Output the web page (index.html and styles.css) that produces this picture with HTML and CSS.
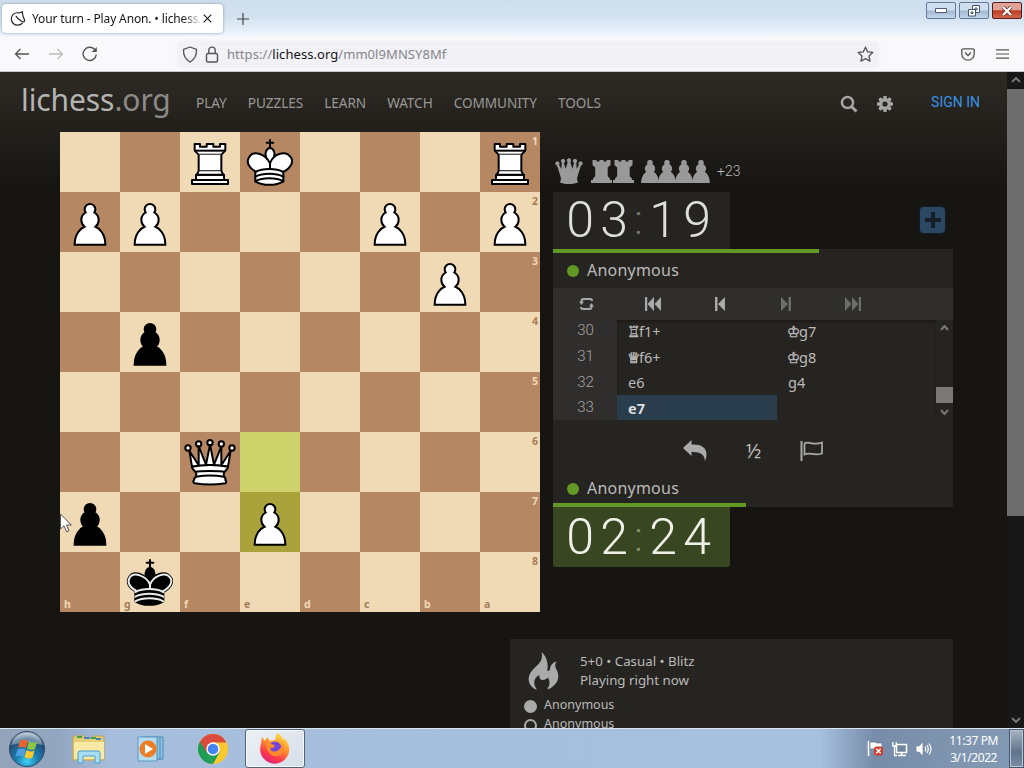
FILE: index.html
```html
<!DOCTYPE html>
<html lang="en">
<head>
<meta charset="utf-8">
<title>Your turn - Play Anon. • lichess.org</title>
<link rel="stylesheet" href="styles.css">
</head>
<body>
<svg class="defs" xmlns="http://www.w3.org/2000/svg">
  <symbol id="pawn" viewBox="0 0 45 45"><path stroke="#000" stroke-width="1.5" stroke-linecap="round" d="M22.5 9c-2.21 0-4 1.79-4 4 0 .89.29 1.71.78 2.38C17.33 16.5 16 18.59 16 21c0 2.03.94 3.84 2.41 5.03-3 1.06-7.41 5.55-7.41 13.47h23c0-7.92-4.41-12.41-7.41-13.47 1.47-1.19 2.41-3 2.41-5.03 0-2.41-1.33-4.5-3.28-5.62.49-.67.78-1.49.78-2.38 0-2.21-1.79-4-4-4z"/></symbol>
  <symbol id="rook" viewBox="0 0 45 45"><g stroke="#000" stroke-width="1.5" stroke-linejoin="round"><path d="M9 39h27v-3H9v3zM12 36v-4h21v4H12zM11 14V9h4v2h5V9h5v2h5V9h4v5"/><path d="M34 14l-3 3H14l-3-3"/><path d="M31 17v12.5H14V17"/><path d="M31 29.5l1.5 2.5h-20l1.5-2.5"/><path d="M11 14h23" fill="none"/></g></symbol>
  <symbol id="king" viewBox="0 0 45 45"><g stroke="#000" stroke-width="1.5" stroke-linecap="round" stroke-linejoin="round"><path fill="none" d="M22.5 11.63V6M20 8h5"/><path d="M22.5 25s4.5-7.5 3-10.5c0 0-1-2.5-3-2.5s-3 2.5-3 2.5c-1.5 3 3 10.5 3 10.5"/><path d="M11.5 37c5.5 3.5 15.5 3.5 21 0v-7s9-4.5 6-10.5c-4-6.5-13.5-3.5-16 4V27v-3.5c-3.5-7.5-13-10.5-16-4-3 6 5 10 5 10V37z"/><path fill="none" d="M11.5 30c5.5-3 15.5-3 21 0m-21 3.5c5.5-3 15.5-3 21 0m-21 3.5c5.5-3 15.5-3 21 0"/></g></symbol>
  <symbol id="blackking" viewBox="0 0 45 45"><use href="#king"/><g fill="none" stroke="#ececec" stroke-width="1.5" stroke-linecap="round" stroke-linejoin="round"><path d="M32 29.5s8.5-4 6.03-9.65C34.15 14 25 18 22.5 24.5l.01 2.1-.01-2.1C20 18 9.906 14 6.997 19.85c-2.497 5.65 4.853 9 4.853 9"/><path d="M11.5 30c5.5-3 15.5-3 21 0m-21 3.5c5.5-3 15.5-3 21 0m-21 3.5c5.5-3 15.5-3 21 0"/></g></symbol>
  <symbol id="queen" viewBox="0 0 45 45"><g stroke="#000" stroke-width="1.5" stroke-linejoin="round"><circle cx="6" cy="12" r="2"/><circle cx="14" cy="9" r="2"/><circle cx="22.5" cy="8" r="2"/><circle cx="31" cy="9" r="2"/><circle cx="39" cy="12" r="2"/><path d="M9 26c8.5-1.5 21-1.5 27 0l2-12-7 11V11l-5.5 13.5-3-15-3 15-5.5-14V25L7 14l2 12z"/><path d="M9 26c0 2 1.5 2 2.5 4 1 1.5 1 1 .5 3.5-1.5 1-1.5 2.5-1.5 2.5-1.5 1.5.5 2.5.5 2.5 6.5 1 16.5 1 23 0 0 0 1.5-1 0-2.5 0 0 .5-1.5-1-2.5-.5-2.5-.5-2 .5-3.5 1-2 2.5-2 2.5-4-8.5-1.5-18.5-1.5-27 0z"/><path fill="none" d="M11.5 30c3.5-1 18.5-1 22 0M12 33.5c6-1 15-1 21 0"/></g></symbol>
  <symbol id="m-queen" viewBox="0 0 28 26"><g fill="#999" stroke="#999"><circle cx="2.400" cy="5.500" r="1.700"/><circle cx="8" cy="3" r="1.700"/><circle cx="14" cy="2.400" r="1.700"/><circle cx="20" cy="3" r="1.700"/><circle cx="25.600" cy="5.500" r="1.700"/><path stroke-width="1.800" stroke-linejoin="round" d="M2.500 6l3.500 11 1 4-1 3q8 2.500 16 0l-1-3 1-4 3.500-11-4.500 8-.7-10L17.500 14 14 3l-3.500 11L7.700 4 7 14z"/></g></symbol>
  <symbol id="m-rook" viewBox="0 0 21 23"><path fill="#999" d="M1.500 0h4v1.500h3V0h4v1.500h3V0h4v5l-2.800 2.500v8.800L19 18.500V20h2v3H0v-3h2v-1.500l2.200-2.200V7.500L1.500 5z"/></symbol>
  <symbol id="m-pawn" viewBox="0 0 18 23"><path fill="#999" d="M9 0c2.200 0 3.600 2.200 2.400 4.200 3.300 2 3.500 5.800 1.300 7.500C15.500 13.500 17.500 17 18 23H0c.5-6 2.500-9.500 5.300-11.300-2.200-1.700-2-5.500 1.300-7.500C5.400 2.200 6.800 0 9 0z"/></symbol>
</svg>

<div class="screen">
  <header class="tabs">
    <div class="tab">
      <svg class="fav" width="16" height="16" viewBox="0 0 16 16" fill="none" stroke="#222" stroke-width="1.200"><path d="M8.500 1.800C4 1.300 1.200 4.500 1.300 8c.1 3.600 3 6.300 6.400 6.200 2 0 3.600-.8 4.800-2.200"/><path d="M8.500 1.800c1.500.1 2.700-.2 3.700-1l.4 2.200c.2 2.700 1.600 4.600 2 6.300.2 1.200-1 2-2 1.500C10.500 9.500 7.500 8.500 6 5"/></svg>
      <div class="tabtitle">Your turn - Play Anon. • lichess.</div>
      <svg width="9" height="9" viewBox="0 0 9 9" stroke="#222" stroke-width="1.200"><path d="M.7.7l7.600 7.600M8.300.7L.7 8.300"/></svg>
    </div>
    <svg class="newtab" width="12" height="12" viewBox="0 0 12 12" stroke="#444" stroke-width="1.200"><path d="M6 0v12M0 6h12"/></svg>
    <div class="winbtns">
      <span class="wb"><svg width="12" height="5" viewBox="0 0 12 5"><path d="M.5.5h11v4H.5z" fill="#fff" stroke="#4c5c74"/></svg></span>
      <span class="wb"><svg width="12" height="12" viewBox="0 0 12 12" fill="#fff" stroke="#44546c"><path d="M4.500.5h7v7h-7z"/><path d="M7 3h2v2H7z"/><path d="M.5 4.500h7v6.500h-7z"/><path d="M3 7h2v1.500H3z"/></svg></span>
      <span class="wb close"><svg width="12" height="10" viewBox="0 0 12 10"><path d="M2 1l8 8M10 1L2 9" stroke="#6b2620" stroke-width="3.800"/><path d="M2 1l8 8M10 1L2 9" stroke="#fff" stroke-width="2.400"/></svg></span>
    </div>
  </header>

  <nav class="toolbar">
    <svg width="16" height="12" viewBox="0 0 16 12" fill="none" stroke="#555" stroke-width="1.300"><path d="M15 6H1.500M6.500 1L1.500 6l5 5"/></svg>
    <svg class="fwd" width="16" height="12" viewBox="0 0 16 12" fill="none" stroke="#bbb" stroke-width="1.300"><path d="M1 6h13.500M9.500 1l5 5-5 5"/></svg>
    <svg class="reload" width="16" height="16" viewBox="0 0 16 16" fill="none" stroke="#555" stroke-width="1.400"><path d="M14.300 8.500A6.600 6.600 0 1 1 12.500 3.300l1.500 1.500"/><path d="M14.800 1v5H9.600z" fill="#555" stroke="none"/></svg>
    <div class="urlbar">
      <svg width="16" height="17" viewBox="0 0 16 17" fill="none" stroke="#555" stroke-width="1.300"><path d="M8 1l6.500 2.300c.3 6-1.700 10.200-6.500 12.700C3.200 13.500 1.200 9.300 1.500 3.300z" stroke-linejoin="round"/></svg>
      <svg class="lock" width="14" height="17" viewBox="0 0 14 17" fill="none" stroke="#555" stroke-width="1.400"><rect x="1.500" y="7.500" width="11" height="8.500" rx="1.500"/><path d="M3.800 7.500V4.300a3.200 3.200 0 0 1 6.400 0v3.200"/></svg>
      <span class="url">https://<b>lichess.org</b>/mm0l9MNSY8Mf</span>
      <svg class="star" width="17" height="17" viewBox="0 0 17 17" fill="none" stroke="#555" stroke-width="1.300" stroke-linejoin="round"><path d="M8.500 1.200l2.200 4.700 5.100.6-3.800 3.500 1 5.100-4.500-2.500L4 15.100l1-5.100-3.800-3.500 5.100-.6z"/></svg>
    </div>
    <svg class="pocket" width="14" height="13" viewBox="0 0 14 13" fill="none" stroke="#555" stroke-width="1.300"><path d="M2 .8h10q1.200 0 1.200 1.200v4a6.200 6.200 0 0 1-12.400 0V2Q.8.800 2 .800z"/><path d="M4 4.500l3 3 3-3"/></svg>
    <svg class="menu" width="13" height="10" viewBox="0 0 13 10" stroke="#555" stroke-width="1.200"><path d="M0 .8h13M0 5h13M0 9.200h13"/></svg>
  </nav>

  <div class="viewport">
    <div class="page">
      <header class="top">
        <h1>lichess<span>.org</span></h1>
        <nav class="links"><a>PLAY</a><a>PUZZLES</a><a>LEARN</a><a>WATCH</a><a>COMMUNITY</a><a>TOOLS</a></nav>
        <div class="tools">
          <svg width="18" height="18" viewBox="0 0 18 18" fill="none" stroke="#a5a5a3" stroke-width="2.500"><circle cx="7.500" cy="7.500" r="5.600"/><path d="M11.500 11.500l5 5" stroke-width="3"/></svg>
          <svg class="gear" width="16" height="16" viewBox="-8 -8 16 16"><g fill="#a5a5a3"><path id="tooth" d="M-1.500-8h3l.5 3h-4zM-1.500 8h3l.5-3h-4z"/><use href="#tooth" transform="rotate(45)"/><use href="#tooth" transform="rotate(90)"/><use href="#tooth" transform="rotate(135)"/></g><circle r="4.200" fill="none" stroke="#a5a5a3" stroke-width="3.200"/></svg>
          <a class="signin">SIGN IN</a>
        </div>
      </header>

      <main class="game">
        <div class="board">
          <i class="hl from c4 r6"></i><i class="hl to c4 r7"></i>
          <svg class="w c3 r1"><use href="#rook"/></svg>
          <svg class="w c4 r1"><use href="#king"/></svg>
          <svg class="w c8 r1"><use href="#rook"/></svg>
          <svg class="w c1 r2"><use href="#pawn"/></svg>
          <svg class="w c2 r2"><use href="#pawn"/></svg>
          <svg class="w c6 r2"><use href="#pawn"/></svg>
          <svg class="w c8 r2"><use href="#pawn"/></svg>
          <svg class="w c7 r3"><use href="#pawn"/></svg>
          <svg class="b c2 r4"><use href="#pawn"/></svg>
          <svg class="w c3 r6"><use href="#queen"/></svg>
          <svg class="b c1 r7"><use href="#pawn"/></svg>
          <svg class="w c4 r7"><use href="#pawn"/></svg>
          <svg class="b c2 r8"><use href="#blackking"/></svg>
          <span class="rank lt c8 r1">1</span><span class="rank dk c8 r2">2</span><span class="rank lt c8 r3">3</span><span class="rank dk c8 r4">4</span><span class="rank lt c8 r5">5</span><span class="rank dk c8 r6">6</span><span class="rank lt c8 r7">7</span><span class="rank dk c8 r8">8</span>
          <span class="file lt c1 r8">h</span><span class="file dk c2 r8">g</span><span class="file lt c3 r8">f</span><span class="file dk c4 r8">e</span><span class="file lt c5 r8">d</span><span class="file dk c6 r8">c</span><span class="file lt c7 r8">b</span><span class="file dk c8 r8">a</span>
          <svg class="cursor" width="13" height="20" viewBox="0 0 13 20"><path d="M.5 1v15l3.500-3.200 2.600 6 2.400-1-2.500-5.800h4.800z" fill="#fff" stroke="#555"/></svg>
        </div>

        <section class="side">
          <div class="material">
            <svg width="28" height="26"><use href="#m-queen"/></svg>
            <span><svg width="21" height="23"><use href="#m-rook"/></svg><svg width="21" height="23"><use href="#m-rook"/></svg></span>
            <span class="pawns"><svg width="18" height="23"><use href="#m-pawn"/></svg><svg width="18" height="23"><use href="#m-pawn"/></svg><svg width="18" height="23"><use href="#m-pawn"/></svg><svg width="18" height="23"><use href="#m-pawn"/></svg></span>
            <em>+23</em>
          </div>
          <div class="clockrow">
            <div class="clock"><span>0</span><span>3</span><i>:</i><span>1</span><span>9</span></div>
            <span class="more"><svg width="16" height="16" viewBox="0 0 16 16" stroke="#161e27" stroke-width="4"><path d="M8 0v16M0 8h16"/></svg></span>
          </div>
          <div class="panel">
            <div class="bar opp"></div>
            <div class="player"><i></i>Anonymous</div>
            <div class="controls">
              <svg width="15" height="14" viewBox="0 0 15 14" fill="none" stroke="#aaa" stroke-width="2"><path d="M2.500 5.500V4q0-2 2-2H11q2 0 2 2M12.500 8.500V10q0 2-2 2H4q-2 0-2-2"/><path d="M0 4.500h5L2.500 8zM10 9.500h5L12.500 6z" fill="#aaa" stroke="none"/></svg>
              <svg width="16" height="14" viewBox="0 0 16 14" fill="#aaa"><path d="M0 0h2.200v14H0zM9 0v14L2.500 7zM16 0v14L9.500 7z"/></svg>
              <svg width="10" height="14" viewBox="0 0 10 14" fill="#aaa"><path d="M0 0h2.500v14H0zM10 0v14L3 7z"/></svg>
              <svg width="10" height="14" viewBox="0 0 10 14" fill="#6c6c6a"><path d="M10 0H7.500v14H10zM0 0v14l7-7z"/></svg>
              <svg width="16" height="14" viewBox="0 0 16 14" fill="#6c6c6a"><path d="M16 0h-2.200v14H16zM7 0v14l6.500-7zM0 0v14l6.500-7z"/></svg>
            </div>
            <div class="moves">
              <div class="nums"><span>30</span><span>31</span><span>32</span><span>33</span></div>
              <div class="list">
                <span><u>♖</u>f1+</span><span><u>♔</u>g7</span>
                <span><u>♕</u>f6+</span><span><u>♔</u>g8</span>
                <span>e6</span><span>g4</span>
                <span class="active">e7</span>
              </div>
              <div class="mscroll">
                <svg width="9" height="6" viewBox="0 0 9 6" fill="none" stroke="#777" stroke-width="2"><path d="M1 5l3.500-4L8 5"/></svg>
                <i></i>
                <svg width="9" height="6" viewBox="0 0 9 6" fill="none" stroke="#777" stroke-width="2"><path d="M1 1l3.500 4L8 1"/></svg>
              </div>
            </div>
            <div class="actions">
              <svg width="24" height="21" viewBox="0 0 24 21" fill="#aaa"><path d="M0 8L8.500 0v4.500c9-.5 15 2.500 15 10 0 2.500-.6 4.500-1.700 6.500 0-6.500-4.300-9.300-13.300-9V16z"/></svg>
              <span>½</span>
              <svg width="23" height="21" viewBox="0 0 23 21" fill="none" stroke="#aaa"><path d="M1.500 1v20" stroke-width="2"/><path d="M4.500 3.500c4-3 8.500 2.500 17.500-1v11c-8.500 3-12-2-17.500 1z" stroke-width="1.700"/></svg>
            </div>
            <div class="player"><i></i>Anonymous</div>
            <div class="bar me"></div>
          </div>
          <div class="clock running"><span>0</span><span>2</span><i>:</i><span>2</span><span>4</span></div>
        </section>
      </main>

      <section class="meta">
        <div class="metahead">
          <svg width="31" height="38" viewBox="0 0 31 38"><path fill="#aaa" d="M13.500 0c1.500 6-.5 10-5.500 14.500C-1 22-2 31 6 36.500c2 1.500 3.500 1.500 2-.5-3.500-5-1.500-11 3.500-13-.5 3 .5 5 3 5s4-1 5.500-2.500c2 4 2 7.500 0 10-1 1.500 0 2 1.500 1.200C30 32 32 25 29 18.500c-2-3.500-2.500-6-.5-9-4 1-6 4-6.500 7.500-.3 2-2 2.500-2.800 1C20.500 12 19 5 13.500 0z"/></svg>
          <div>5+0 • Casual • Blitz<br>Playing right now</div>
        </div>
        <div class="who"><i class="full"></i>Anonymous</div>
        <div class="who"><i></i>Anonymous</div>
      </section>
    </div>
    <div class="scroll">
      <svg width="10" height="6" viewBox="0 0 10 6" fill="none" stroke="#777" stroke-width="2"><path d="M1 5l4-4 4 4"/></svg>
      <i></i>
      <svg width="10" height="6" viewBox="0 0 10 6" fill="none" stroke="#777" stroke-width="2"><path d="M1 1l4 4 4-4"/></svg>
    </div>
  </div>

  <footer class="taskbar">
    <svg class="orb" width="38" height="38" viewBox="0 0 38 38">
      <defs><radialGradient id="orb" cx=".5" cy=".85" r=".8"><stop offset="0" stop-color="#3fd0f5"/><stop offset=".4" stop-color="#1a7cae"/><stop offset=".8" stop-color="#234f78"/><stop offset="1" stop-color="#9db3c6"/></radialGradient></defs>
      <circle cx="19" cy="19" r="17.500" fill="url(#orb)" stroke="#31465e"/>
      <path d="M3.500 15a16 16 0 0 1 31 0q-16-5-31 0z" fill="#fff" opacity=".35"/>
      <path d="M12 11q4-2.500 8 0l-2 7q-4-2-8 0z" fill="#e8642c"/><path d="M21 11.500q4 2.500 8 0l-2 7.500q-4 2-8-.5z" fill="#8dc63f"/><path d="M9.500 19.500q4-2 8 0l-2 7q-4-2-8 0z" fill="#4d9fe0"/><path d="M18.500 20q4 2.500 8 .5l-2 7q-4 2-8-.5z" fill="#fcc72c"/>
    </svg>
    <svg class="folder" width="34" height="30" viewBox="0 0 34 30"><path d="M1 4q0-2 2-2h9l2 2h6l1-2h9q2 0 2 2v22H1z" fill="#e5cd77" stroke="#c5a64e"/><path d="M5 3h5M19 4h5" stroke="#3da24a" stroke-width="2"/><path d="M12 4h6M24 5h5" stroke="#4c83b7" stroke-width="2"/><path d="M2 8h30v17H2z" fill="#f8e9a5"/><path d="M6 29V19q0-2 2-2h18q2 0 2 2v10h-5v-7H11v7z" fill="#a7def5" stroke="#4b9dc5"/></svg>
    <svg class="media" width="28" height="26" viewBox="0 0 28 26"><path d="M5 1h21v22H5z" fill="#8fc4e5" stroke="#4d87b5"/><path d="M23 1v23M20 1v24" stroke="#4d87b5"/><path d="M1 1h19v24H1z" fill="#b4dbf0" stroke="#5d99c2"/><circle cx="11" cy="13" r="8.500" fill="#ed7d23"/><path d="M8 8l8 5-8 5z" fill="#fff"/></svg>
    <svg class="chrome" width="30" height="30" viewBox="-15 -15 30 30"><circle r="15" fill="#fbc92e"/><path d="M0 0L-13 7.500A15 15 0 0 1-13-7.500zM-13-7.500L-6 4 0 15A15 15 0 0 1-13-7.500z" fill="#1e9d57"/><path d="M0 15L6.500 3.500 0 0-6.500 3.500z" fill="#1e9d57"/><path d="M-13-7.500A15 15 0 0 1 13-7.500L13-6.500H0L-6.500 3.500z" fill="#dd4b3e"/><circle r="6.700" fill="#fff"/><circle r="5.300" fill="#4285f4"/></svg>
    <span class="fxbtn"><svg width="31" height="31" viewBox="0 0 31 31">
      <defs><linearGradient id="fx" x1=".8" y1="0" x2=".3" y2="1"><stop offset="0" stop-color="#ffe84a"/><stop offset=".4" stop-color="#ff9a28"/><stop offset=".75" stop-color="#fa3b4c"/><stop offset="1" stop-color="#dd217e"/></linearGradient></defs>
      <path d="M18 0c4 2 5 4 6 7l1-2c4 4 6 9 5 14A14.600 14.600 0 1 1 2 11L3 4l3 4 2-4 3 4 5-1z" fill="url(#fx)"/><circle cx="16" cy="15" r="6.500" fill="#7544db"/><path d="M7 11q5-2 9 2-2 3-5 2 1 5 7 3 6-3 4-9 4 4 2 9-3 6-9 5-7-2-8-12z" fill="#ff8a2c"/></svg></span>
    <div class="tray">
      <svg width="18" height="17" viewBox="0 0 18 17"><path d="M1.500 1v15" stroke="#fff" stroke-width="1.600"/><path d="M3 2h5l2 1h5v8H9L7 9H3z" fill="#fff" stroke="#53657b" stroke-width=".6"/><rect x="7" y="6.500" width="9" height="9" rx="2.500" fill="#d33b2c"/><path d="M9.300 8.800l4.400 4.400M13.700 8.800l-4.400 4.400" stroke="#fff" stroke-width="1.500"/></svg>
      <svg width="16" height="16" viewBox="0 0 16 16"><path d="M4.500 3.500h10v8h-10z" fill="#71879e" stroke="#fff" stroke-width="1.500"/><path d="M6 14.500h8M9.500 12v2" stroke="#fff" stroke-width="1.600"/><path d="M.8 1v4h3.500V1M2.500 5v9.500H5" fill="none" stroke="#fff" stroke-width="1.300"/></svg>
      <svg width="17" height="16" viewBox="0 0 17 16"><path d="M1 5h3l4-4v14l-4-4H1z" fill="#fff" stroke="#586b82" stroke-width=".5"/><path d="M10 5.500q1.500 2.500 0 5M12 4q2.500 4 0 8M14 2.500q4 5.500 0 11" fill="none" stroke="#fff" stroke-width="1.200"/></svg>
      <div class="time">11:37 PM<br>3/1/2022</div>
    </div>
    <span class="desk"></span>
  </footer>
</div>
</body>
</html>
```
FILE: styles.css
```css
* { box-sizing: border-box; }
body { margin: 0; font-family: "Noto Sans", sans-serif; }
svg { display: block; flex: none; }
.defs { position: absolute; width: 0; height: 0; }
.screen { width: 1024px; height: 768px; display: flex; flex-direction: column; overflow: hidden; }

.tabs { height: 37px; flex: none; display: flex; background: linear-gradient(#cfdeec, #d3e2f0 45%, #e4eef8 80%, #f4f8fc); }
.tab { width: 221px; height: 29px; margin: 4px 0 0 2px; padding: 0 11px 0 8px; display: flex; align-items: center; background: #fff; border-radius: 4px; box-shadow: 0 0 3px #7f93ad; }
.fav { margin-top: 1px; }
.tabtitle { width: 168px; margin: 0 3px 0 6px; font-size: 12px; letter-spacing: -.14px; white-space: nowrap; color: transparent; background: linear-gradient(90deg, #15141a 150px, #ccc 166px); -webkit-background-clip: text; background-clip: text; }
.newtab { margin: 13px 0 0 14px; }
.winbtns { display: flex; gap: 3px; margin: 2px 2px 0 auto; }
.wb { width: 30px; height: 17px; display: flex; align-items: center; justify-content: center; border: 1px solid #65799a; border-radius: 2px; background: linear-gradient(#d0dfef 48%, #a3b9d3 52%, #c2d5e8); }
.wb.close { border-color: #5b1c1a; background: linear-gradient(#dfa294 45%, #bd3d27 52%, #d0674a); }

.toolbar { height: 35px; flex: none; display: flex; align-items: center; padding: 0 15px 0 14px; background: #f9f9fb; border-bottom: 1px solid #c9c9cc; }
.fwd { margin-left: 18px; }
.reload { margin-left: 18px; }
.urlbar { width: 702px; height: 27px; margin-left: 79px; padding: 0 5px; display: flex; align-items: center; background: #f2f1f5; border-radius: 4px; box-shadow: 0 0 3px #f2f1f5; }
.lock { margin-left: 7px; }
.url { margin-left: 8px; font-size: 13px; letter-spacing: .06px; color: #85858c; white-space: nowrap; }
.url b { font-weight: 400; color: #15141a; }
.star { margin-left: auto; }
.pocket { margin-left: auto; }
.menu { margin-left: 21px; }

.viewport { height: 656px; flex: none; display: flex; overflow: hidden; }
.page { width: 1007px; background: linear-gradient(#2e2a24, #161512 118px); color: #bababa; overflow: hidden; }
.top { height: 60px; display: flex; align-items: center; padding: 0 27px 0 21px; }
h1 { width: 150px; margin: -4px 0 0; font-size: 30px; line-height: 56px; letter-spacing: -.1px; font-weight: 400; color: #b4b4b2; white-space: nowrap; }
h1 span { color: #8a8a88; }
.links { display: flex; gap: 21px; margin: 1px 0 0 25px; font-size: 13.600px; letter-spacing: -.05px; color: #989896; white-space: nowrap; }
.tools { margin-left: auto; display: flex; align-items: center; color: #3692e7; }
.tools svg { margin-top: 4px; }
.tools .gear { margin-left: 19px; margin-top: 3px; }
.signin { margin-left: 38px; font: 14px Roboto, sans-serif; }

.game { height: 480px; display: flex; padding-left: 60px; gap: 13px; }
.board { position: relative; width: 480px; height: 480px; flex: none; display: grid; grid-template: repeat(8, 60px) / repeat(8, 60px); background: conic-gradient(#b58863 25%, #f0d9b5 0 50%, #b58863 0 75%, #f0d9b5 0) 0 0 / 120px 120px; }
.board > svg:not(.cursor) { width: 60px; height: 60px; }
.w { fill: #fff; }
.b { fill: #000; }
.c1 { grid-column: 1; } .c2 { grid-column: 2; } .c3 { grid-column: 3; } .c4 { grid-column: 4; }
.c5 { grid-column: 5; } .c6 { grid-column: 6; } .c7 { grid-column: 7; } .c8 { grid-column: 8; }
.r1 { grid-row: 1; } .r2 { grid-row: 2; } .r3 { grid-row: 3; } .r4 { grid-row: 4; }
.r5 { grid-row: 5; } .r6 { grid-row: 6; } .r7 { grid-row: 7; } .r8 { grid-row: 8; }
.from { background: #cdd26a; }
.to { background: #aaa23a; }
.rank, .file { font-size: 10.500px; line-height: 14px; font-weight: 700; }
.rank { justify-self: end; align-self: start; padding: 2px 2px 0 0; }
.file { justify-self: start; align-self: end; padding: 0 0 1px 4px; }
.lt { color: #f0d9b5; }
.dk { color: #a57d58; }
.cursor { position: absolute; left: 0; top: 381px; }

.side { width: 400px; padding-top: 26px; }
.material { height: 34px; display: flex; align-items: center; padding: 0 0 8px 2px; }
.material span { display: flex; gap: 1px; margin: 1px 0 0 8px; }
.material .pawns { gap: 0; margin-left: 7px; }
.pawns svg + svg { margin-left: -1px; }
.material em { margin-left: 7px; font: 300 14px Roboto, sans-serif; }
.clockrow { height: 57px; display: flex; justify-content: space-between; }
.clock { width: 177px; height: 57px; display: flex; align-items: center; padding-left: 10px; background: #262421; color: #dededb; font: 300 50px/57px Roboto, sans-serif; }
.clock span { width: 34px; text-align: center; }
.clock i { width: 15px; text-align: center; font-style: normal; font-size: 40px; color: #777; }
.running { height: 60px; background: #384722; color: #f0f0e8; border-radius: 0 0 3px 3px; }
.running i { color: #899477; }
.more { width: 25px; height: 26px; margin: 15px 8px 0 0; display: flex; align-items: center; justify-content: center; background: #2c4763; border-radius: 4px; box-shadow: 0 0 3px #1b2a3a; }
.panel { height: 258px; background: #262421; display: flex; flex-direction: column; }
.panel > * { flex: none; }
.bar { height: 4px; background: #629924; }
.opp { width: 266px; }
.me { width: 193px; margin-top: auto; }
.player { height: 35px; padding: 0 0 1px 14px; display: flex; align-items: center; gap: 8px; font-size: 16px; letter-spacing: .22px; line-height: 22px; }
.player i { width: 12px; height: 12px; margin-top: 2px; border-radius: 50%; background: #629924; }
.controls { height: 32px; display: grid; grid-template-columns: repeat(6, 66.700px); align-items: center; justify-items: center; background: #302e2c; }
.moves { height: 100px; display: flex; font-size: 15px; }
.nums { width: 64px; display: grid; grid-template-rows: repeat(4, 25.700px); align-content: end; padding-left: 1px; text-align: center; line-height: 26px; background: #302e2c; color: #a5a5a3; font-family: Roboto, sans-serif; font-weight: 300; overflow: hidden; }
.list { width: 319px; display: grid; grid-template: repeat(4, 25.500px) / 160px 160px; align-content: end; line-height: 26px; font-size: 14.500px; overflow: hidden; box-shadow: inset 0 2px 2px #1d1b19; }
.list span { padding-left: 11px; }
.list u { text-decoration: none; display: inline-block; width: 11px; font: 15px/20px "DejaVu Sans", sans-serif; text-indent: -1px; -webkit-text-stroke: .4px #bababa; }
.list .active { background: #293d4d; color: #dedede; font-weight: 700; }
.mscroll { width: 17px; display: flex; flex-direction: column; align-items: center; padding: 5px 0; }
.mscroll i { width: 17px; height: 16px; margin: auto 0 6px; background: #7b7977; }
.actions { height: 61px; display: flex; align-items: center; gap: 37px; padding-left: 130px; font-size: 20px; }
.actions span { width: 19px; text-align: center; }
.actions + .player { height: 22px; margin-top: -4px; }

.meta { width: 443px; height: 140px; margin: 27px 0 0 510px; padding: 13px 14px; background: #262421; }
.metahead { display: flex; gap: 21px; padding-left: 4px; height: 43px; font-size: 13.300px; line-height: 19px; align-items: start; }
.who { height: 19px; display: flex; align-items: center; gap: 7px; font-size: 12.500px; line-height: 19px; }
.who i { width: 13px; height: 13px; margin-top: 3px; border: 2px solid #aaa; border-radius: 50%; }
.who .full { background: #aaa; }

.scroll { width: 17px; background: #171717; display: flex; flex-direction: column; align-items: center; padding: 5px 0; }
.scroll i { width: 17px; height: 427px; margin: 6px 0 auto; background: #6d6d6d; }

.taskbar { height: 40px; flex: none; display: flex; align-items: center; border-top: 1px solid #dbe6f1; background: linear-gradient(90deg, #92a3ba 0, #92a6c0 60px, #a6bedb 110px, #a6c0de 820px, #778ca8 875px, #8399b3 1000px); }
.orb { margin-left: 8px; }
.folder { margin-left: 26px; }
.media { margin-left: 31px; }
.chrome { margin-left: 33px; }
.fxbtn { width: 60px; height: 39px; margin-left: 17px; display: flex; align-items: center; justify-content: center; padding-right: 2px; background: linear-gradient(135deg, #edf1f5, #d5dee9); border: 1px solid #53637a; border-radius: 3px; box-shadow: inset 0 0 0 1px #f6f9fb; }
.tray { margin-left: auto; display: flex; align-items: center; gap: 7px; padding-right: 11px; }
.time { margin-left: 10px; color: #fff; font-size: 12px; line-height: 17px; letter-spacing: -.4px; text-align: center; white-space: nowrap; }
.desk { width: 15px; height: 39px; border: 1px solid #46566b; background: linear-gradient(#a7b3c2, #5f738c 60%, #7b8ea7); box-shadow: inset 0 0 0 1px #b9c6d6; }
```
